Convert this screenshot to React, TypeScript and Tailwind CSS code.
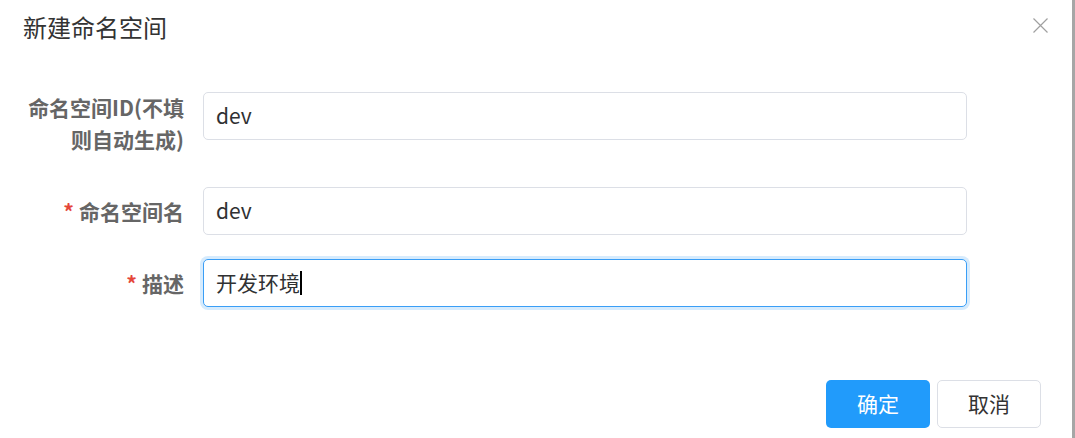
import React from "react";

const FONT = { fontFamily: '"Noto Sans CJK SC", "Noto Sans", sans-serif' };

function Label({ required, children, twoLine }: { required?: boolean; children: React.ReactNode; twoLine?: boolean }) {
  return (
    <div
      className={`w-[181px] shrink-0 pr-[19px] text-right text-[21px] font-bold text-[#666666] ${
        twoLine ? "leading-[31.5px]" : "leading-[48px]"
      }`}
    >
      {required && <span className="mr-[5px] text-[#e5463a]">*</span>}
      {children}
    </div>
  );
}

function Field({ children, focused }: { children: React.ReactNode; focused?: boolean }) {
  return (
    <div
      className={`flex h-[48px] w-[764px] items-center rounded-[5px] border bg-white pl-[12px] text-[21px] text-[#303133] ${
        focused ? "border-[#3a9ef6] ring-[3px] ring-[#d6ebfd]" : "border-[#dcdfe6]"
      }`}
    >
      {children}
    </div>
  );
}

export default function App() {
  return (
    <div className="flex h-[438px] w-[1075px] bg-white" style={FONT}>
      <div className="flex flex-1 flex-col bg-white">
        <div className="flex h-[92px] items-start justify-between pl-[23px] pr-[24px]">
          <div className="pt-[11px] text-[24px] leading-[32px] text-[#333333]">新建命名空间</div>
          <svg className="mt-[18px]" width="15" height="15" viewBox="0 0 15 15">
            <path d="M0.5 0.5 L14.5 14.5 M14.5 0.5 L0.5 14.5" stroke="#a0a0a0" strokeWidth="1.2" fill="none" />
          </svg>
        </div>

        <div className="flex flex-col pl-[22px]">
          <div className="mb-[32px] flex items-start">
            <Label twoLine>
              命名空间ID(不填
              <br />
              则自动生成)
            </Label>
            <Field>dev</Field>
          </div>
          <div className="mb-[24px] flex items-start">
            <Label required>命名空间名</Label>
            <Field>dev</Field>
          </div>
          <div className="flex items-start">
            <Label required>描述</Label>
            <Field focused>
              <span>开发环境</span>
              <span className="inline-block h-[24px] w-[2px] bg-black" />
            </Field>
          </div>
        </div>

        <div className="mt-[73px] flex justify-end gap-[7px] pr-[31px]">
          <button className="flex h-[48px] w-[104px] items-center justify-center rounded-[5px] bg-[#219bfb] text-[21px] text-white">
            确定
          </button>
          <button className="flex h-[48px] w-[104px] items-center justify-center rounded-[5px] border border-[#dcdfe6] bg-white text-[21px] text-[#333333]">
            取消
          </button>
        </div>
      </div>
      <div className="w-[3px] bg-[#a6a6a6]" />
    </div>
  );
}
